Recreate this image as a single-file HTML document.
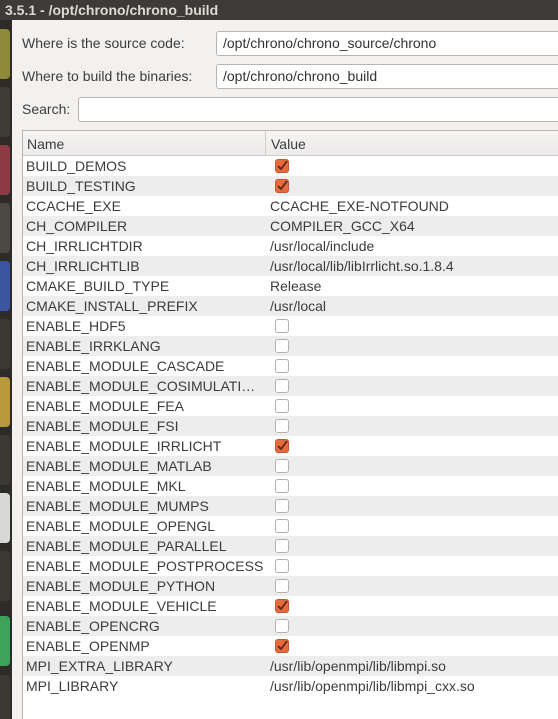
<!DOCTYPE html>
<html><head><meta charset="utf-8"><style>
*{margin:0;padding:0;box-sizing:border-box}
html,body{width:558px;height:719px;overflow:hidden}
body{background:#f2f1f0;font-family:"Liberation Sans",sans-serif;font-size:13px;color:#3c3c3c;position:relative}
.title{position:absolute;left:0;top:0;width:558px;height:20px;background:#3c3b37;color:#dfdbd2;font-weight:bold;font-size:14px;line-height:20px;padding-left:5px}
.strip{position:absolute;left:0;top:20px;width:12px;height:699px;background:#2c2b27}
.ic{position:absolute;left:0;width:10px;height:50px;border-radius:0 4px 4px 0}
.lbl{position:absolute;left:22px;font-size:14px;color:#3c3c3c}
.inp{position:absolute;background:#fff;border:1px solid #b8b5b0;border-radius:3px;font-size:14px;padding-left:6px;line-height:23px;color:#333}
.tbl{position:absolute;left:22px;top:130px;width:540px;height:595px;background:#fff;border:1px solid #b8b5b0}
.hdr{position:absolute;left:0;top:0;width:100%;height:25px;background:linear-gradient(#f5f4f3,#ecebea);border-bottom:1px solid #cfcdca}
.hdr span{position:absolute;top:5px;font-size:14px}
.div{position:absolute;left:242px;top:0;width:1px;height:25px;background:#cfcdca}
.row{position:absolute;left:0;width:100%;height:20px;font-size:14px;line-height:20px}
.row.g{background:#ededed}
.n{position:absolute;left:3px}
.v{position:absolute;left:247px}
.cb{position:absolute;left:252px;top:3px;width:14px;height:14px;border:1px solid #b3b0ab;border-radius:3px;background:#fff}
.cb.on{background:#e8693c;border-color:#c05a30}
.cb.on svg{position:absolute;left:0;top:0}
</style></head><body>
<div class="title">3.5.1 - /opt/chrono/chrono_build</div>
<div class="strip">
<div class="ic" style="top:9px;background:#8f8a3a"></div>
<div class="ic" style="top:67px;background:#3e3d35"></div>
<div class="ic" style="top:125px;background:#8e3a44"></div>
<div class="ic" style="top:183px;background:#4a4944"></div>
<div class="ic" style="top:241px;background:#3c55a0"></div>
<div class="ic" style="top:299px;background:#3a3932"></div>
<div class="ic" style="top:357px;background:#b89a3c"></div>
<div class="ic" style="top:415px;background:#3a3932"></div>
<div class="ic" style="top:473px;background:#d8d8d8"></div>
<div class="ic" style="top:531px;background:#3a3932"></div>
<div class="ic" style="top:596px;background:#3ea35a"></div>
<div class="ic" style="top:655px;background:#3a3932"></div>
</div>
<div class="lbl" style="top:35px">Where is the source code:</div>
<div class="inp" style="left:216px;top:31px;width:350px;height:25px">/opt/chrono/chrono_source/chrono</div>
<div class="lbl" style="top:68px">Where to build the binaries:</div>
<div class="inp" style="left:216px;top:64px;width:350px;height:25px">/opt/chrono/chrono_build</div>
<div class="lbl" style="top:101px">Search:</div>
<div class="inp" style="left:78px;top:97px;width:490px;height:25px"></div>
<div class="tbl">
<div class="hdr"><span style="left:4px">Name</span><div class="div"></div><span style="left:248px">Value</span></div>
<div id="rows"></div>
</div>
<script>
var d=[["BUILD_DEMOS",1],["BUILD_TESTING",1],["CCACHE_EXE","CCACHE_EXE-NOTFOUND"],["CH_COMPILER","COMPILER_GCC_X64"],["CH_IRRLICHTDIR","/usr/local/include"],["CH_IRRLICHTLIB","/usr/local/lib/libIrrlicht.so.1.8.4"],["CMAKE_BUILD_TYPE","Release"],["CMAKE_INSTALL_PREFIX","/usr/local"],["ENABLE_HDF5",0],["ENABLE_IRRKLANG",0],["ENABLE_MODULE_CASCADE",0],["ENABLE_MODULE_COSIMULATI…",0],["ENABLE_MODULE_FEA",0],["ENABLE_MODULE_FSI",0],["ENABLE_MODULE_IRRLICHT",1],["ENABLE_MODULE_MATLAB",0],["ENABLE_MODULE_MKL",0],["ENABLE_MODULE_MUMPS",0],["ENABLE_MODULE_OPENGL",0],["ENABLE_MODULE_PARALLEL",0],["ENABLE_MODULE_POSTPROCESS",0],["ENABLE_MODULE_PYTHON",0],["ENABLE_MODULE_VEHICLE",1],["ENABLE_OPENCRG",0],["ENABLE_OPENMP",1],["MPI_EXTRA_LIBRARY","/usr/lib/openmpi/lib/libmpi.so"],["MPI_LIBRARY","/usr/lib/openmpi/lib/libmpi_cxx.so"]];
var h="";
d.forEach(function(r,i){
var v;
if(r[1]===1)v='<div class="cb on"><svg width="12" height="12" viewBox="0 0 12 12"><path d="M2 6 L5 9 L11 1" stroke="#5a2a18" stroke-width="1.8" fill="none"/></svg></div>';
else if(r[1]===0)v='<div class="cb"></div>';
else v='<span class="v">'+r[1]+'</span>';
h+='<div class="row'+(i%2?' g':'')+'" style="top:'+(25+i*20)+'px"><span class="n">'+r[0]+'</span>'+v+'</div>';
});
document.getElementById("rows").innerHTML=h;
</script>
</body></html>
